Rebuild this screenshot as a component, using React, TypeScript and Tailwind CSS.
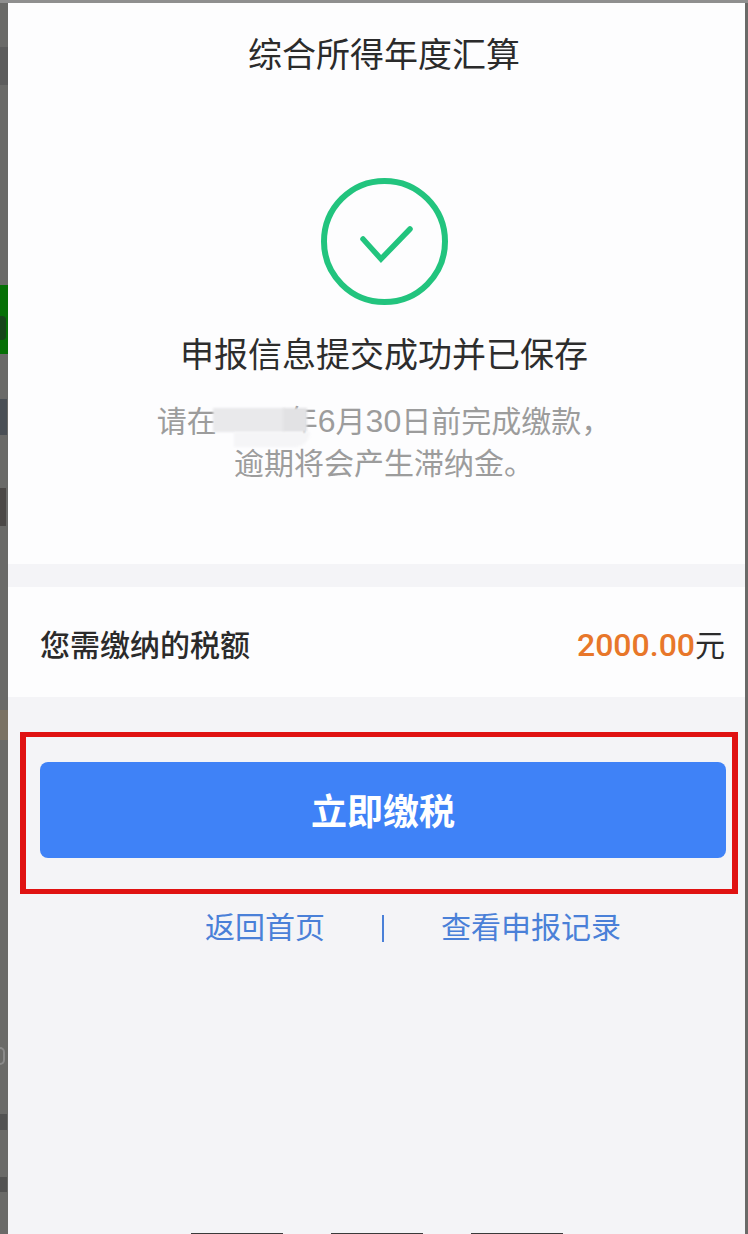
const fontStack = { fontFamily: '"Liberation Sans", "Noto Sans CJK SC", sans-serif' };

function LeftStrip() {
  return (
    <div className="w-2 shrink-0 flex flex-col bg-[#6a6a68]">
      <div className="mt-[44px] h-[38px] bg-[#5c5c5c]" />
      <div className="mt-[200px] h-[69px] bg-[#067006] pt-[31px]">
        <div className="h-[24px] w-[6px] bg-[#17451a] rounded-r" />
      </div>
      <div className="mt-[45px] h-[36px] w-[7px] bg-[#4a4f55]" />
      <div className="mt-[53px] h-[38px] w-[6px] bg-[#4b4846]" />
      <div className="mt-[184px] h-[30px] bg-[#7a7264]" />
      <div className="mt-[307px] h-[18px] w-[5px] rounded-r-full border-2 border-l-0 border-[#8a8a8a]" />
      <div className="mt-[49px] h-[16px] w-[7px] bg-[#525252]" />
      <div className="mt-[47px] h-[15px] w-[7px] bg-[#525252]" />
    </div>
  );
}

export default function App() {
  return (
    <div className="w-[748px] h-[1234px] flex flex-col bg-[#6a6a68] overflow-hidden" style={fontStack}>
      <div className="h-[3px] shrink-0 bg-[#8f8f8f]" />
      <div className="flex-1 flex min-h-0">
        <LeftStrip />

        <div className="flex-1 flex flex-col bg-[#f4f4f7]">
          {/* Result */}
          <div className="h-[561px] shrink-0 bg-[#fdfdfe] flex flex-col items-center pt-[32px] pl-[15px]">
            <h1 className="text-[34px] leading-[40px] text-[#2b2b2b]">综合所得年度汇算</h1>
            <svg className="mt-[103px] w-[127px] h-[127px]" viewBox="0 0 127 127" fill="none">
              <circle cx="63.5" cy="63.5" r="60.5" stroke="#22c47e" strokeWidth="6" />
              <path d="M42 61 L60 81 L89 51" stroke="#22c47e" strokeWidth="5.5" strokeLinecap="round" strokeLinejoin="miter" />
            </svg>
            <h2 className="mt-[28px] text-[34px] leading-[44px] text-[#2d2d2d]">申报信息提交成功并已保存</h2>
            <p className="mt-[23px] text-[30px] leading-[42px] text-[#9c9c9c] text-center">
              请在
              <span className="relative inline-block w-[101px] text-right align-top">
                年
                <span className="absolute left-[-4px] top-[8px] w-[72px] h-[24px] bg-[#e9e9eb] blur-[1px]" />
                <span className="absolute left-[66px] top-[8px] w-[24px] h-[24px] bg-[#e2e2e4] blur-[1px]" />
                <span className="absolute left-[17px] top-[32px] w-[76px] h-[15px] rounded-br-2xl bg-[#f5f5f7] blur-[1px]" />
              </span>
              <span className="text-[32px]">6</span>月<span className="text-[32px]">30</span>日前完成缴款，
              <br />
              逾期将会产生滞纳金。
            </p>
          </div>

          {/* Tax amount */}
          <div className="mt-[23px] h-[110px] shrink-0 bg-[#fdfdfe] flex items-center justify-between pt-[6px] pl-[32px] pr-[20px]">
            <span className="text-[30px] font-medium text-[#2b2b2b]">您需缴纳的税额</span>
            <span className="text-[30px] text-[#2b2b2b] flex items-baseline">
              <span className="font-[Roboto] text-[32px] font-medium text-[#e8772a]">2000.00</span>元
            </span>
          </div>

          {/* Highlighted action */}
          <div className="mt-[35px] ml-[12px] mr-[7px] h-[162px] shrink-0 border-y-[5px] border-x-[6px] border-[#e01212] pt-[25px] pl-[14px] pr-[6px]">
            <button
              type="button"
              className="w-full h-[96px] pt-[5px] rounded-lg bg-[#3f82f7] text-white text-[36px] font-bold flex items-center justify-center"
            >
              立即缴税
            </button>
          </div>

          <div className="mt-[14px] flex items-center pl-[197px] text-[30px] leading-[40px] text-[#4a80d8]">
            <a>返回首页</a>
            <span className="ml-[57px] mr-[57px] w-[2px] h-[27px] bg-[#4a80d8]" />
            <a>查看申报记录</a>
          </div>

          {/* Bars cut off by the bottom edge */}
          <div className="mt-auto flex justify-center gap-[48px]">
            <div className="w-[92px] h-[1px] bg-[#3a3a3a]" />
            <div className="w-[92px] h-[1px] bg-[#3a3a3a]" />
            <div className="w-[92px] h-[1px] bg-[#3a3a3a]" />
          </div>
        </div>

        <div className="w-[3px] shrink-0 bg-[#6a6a68]" />
      </div>
    </div>
  );
}
